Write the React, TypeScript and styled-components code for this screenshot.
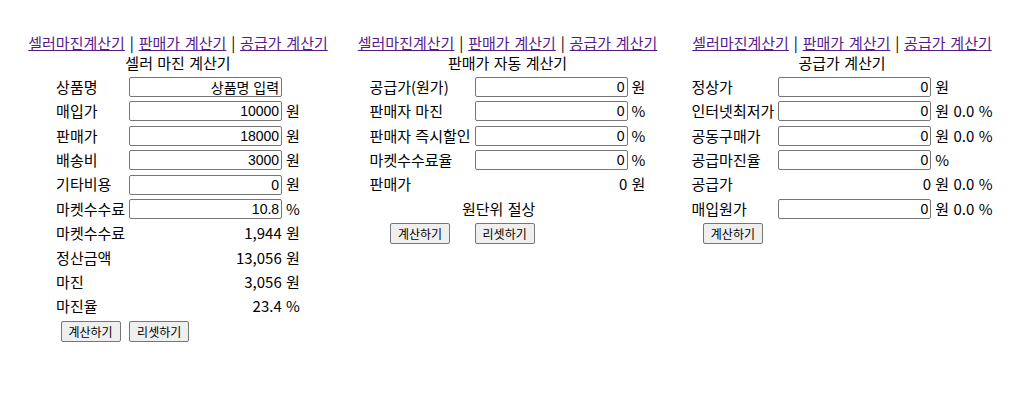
import React from 'react';
import styled, {createGlobalStyle} from "styled-components";

type Row =
    | {kind: 'input'; label: string; value: string; unit?: string}
    | {kind: 'result'; label: string; text: string}
    | {kind: 'note'; text: string};

type Calc = {
    title: string;
    width: number;
    rows: Row[];
    reset: boolean;
};

const calcs: Calc[] = [
    {
        title: '셀러 마진 계산기',
        width: 328,
        reset: true,
        rows: [
            {kind: 'input', label: '상품명', value: '상품명 입력'},
            {kind: 'input', label: '매입가', value: '10000', unit: '원'},
            {kind: 'input', label: '판매가', value: '18000', unit: '원'},
            {kind: 'input', label: '배송비', value: '3000', unit: '원'},
            {kind: 'input', label: '기타비용', value: '0', unit: '원'},
            {kind: 'input', label: '마켓수수료', value: '10.8', unit: '%'},
            {kind: 'result', label: '마켓수수료', text: '1,944 원'},
            {kind: 'result', label: '정산금액', text: '13,056 원'},
            {kind: 'result', label: '마진', text: '3,056 원'},
            {kind: 'result', label: '마진율', text: '23.4 %'},
        ],
    },
    {
        title: '판매가 자동 계산기',
        width: 331,
        reset: true,
        rows: [
            {kind: 'input', label: '공급가(원가)', value: '0', unit: '원'},
            {kind: 'input', label: '판매자 마진', value: '0', unit: '%'},
            {kind: 'input', label: '판매자 즉시할인', value: '0', unit: '%'},
            {kind: 'input', label: '마켓수수료율', value: '0', unit: '%'},
            {kind: 'result', label: '판매가', text: '0 원'},
            {kind: 'note', text: '원단위 절상'},
        ],
    },
    {
        title: '공급가 계산기',
        width: 338,
        reset: false,
        rows: [
            {kind: 'input', label: '정상가', value: '0', unit: '원'},
            {kind: 'input', label: '인터넷최저가', value: '0', unit: '원 0.0 %'},
            {kind: 'input', label: '공동구매가', value: '0', unit: '원 0.0 %'},
            {kind: 'input', label: '공급마진율', value: '0', unit: '%'},
            {kind: 'result', label: '공급가', text: '0 원 0.0 %'},
            {kind: 'input', label: '매입원가', value: '0', unit: '원 0.0 %'},
        ],
    },
];

const Calculator = ({calc}: {calc: Calc}) => {
    return (
        <Column $width={calc.width}>
            <NavLinks>
                <NavLink href="#!">셀러마진계산기</NavLink> | <NavLink href="#!">판매가 계산기</NavLink> | <NavLink href="#!">공급가 계산기</NavLink>
            </NavLinks>
            <Title>{calc.title}</Title>

            <CalcTable>
                <tbody>
                {calc.rows.map((row, i) => {
                    if (row.kind === 'input') {
                        return (
                            <tr key={i}>
                                <Label>{row.label}</Label>
                                <td><Field type="text" defaultValue={row.value}/></td>
                                <Unit>{row.unit}</Unit>
                            </tr>
                        );
                    }
                    if (row.kind === 'result') {
                        return (
                            <tr key={i}>
                                <Label>{row.label}</Label>
                                <Result colSpan={2}>{row.text}</Result>
                            </tr>
                        );
                    }
                    return (
                        <tr key={i}>
                            <Note colSpan={2}>{row.text}</Note>
                            <td/>
                        </tr>
                    );
                })}
                <tr>
                    <ButtonCell $align="center"><Btn type="button">계산하기</Btn></ButtonCell>
                    <ButtonCell $align="left">{calc.reset && <Btn type="button">리셋하기</Btn>}</ButtonCell>
                    <td/>
                </tr>
                </tbody>
            </CalcTable>
        </Column>
    );
};

export default function App() {
    return (
        <>
            <GlobalStyle/>
            <Page>
                {calcs.map((c) => <Calculator key={c.title} calc={c}/>)}
            </Page>
        </>
    );
}

const GlobalStyle = createGlobalStyle`
  body {
    margin: 8px;
    background: #ffffff;
    color: #000000;
    font-family: "Noto Sans CJK KR", "Noto Sans", sans-serif;
    font-size: 15px;
    line-height: 20.4px;
    word-spacing: 1px;
  }
`;

const Page = styled.div`
  display: flex;
  align-items: flex-start;
  padding: 25px 0 0 6px;
`;

const Column = styled.div<{$width: number}>`
  width: ${({$width}) => $width}px;
  flex-shrink: 0;
  text-align: center;
`;

const NavLinks = styled.div`
  white-space: nowrap;
  word-spacing: 1.5px;
`;

const NavLink = styled.a`
  color: #551a8b;
  text-decoration: underline;
`;

const Title = styled.div``;

const CalcTable = styled.table`
  margin: 0 auto;
  border-spacing: 2px;
  text-align: left;

  td {
    padding: 1px;
    height: 20.4px;
    vertical-align: middle;
    white-space: nowrap;
  }
`;

const Label = styled.td``;

const Unit = styled.td``;

const Result = styled.td`
  text-align: right;
`;

const Note = styled.td`
  text-align: center;
`;

const ButtonCell = styled.td<{$align: 'center' | 'left'}>`
  text-align: ${({$align}) => $align};
`;

const Field = styled.input`
  display: block;
  box-sizing: border-box;
  width: 153px;
  height: 20px;
  margin: 0;
  padding: 1px 2px;
  border: 1px solid #767676;
  border-radius: 2px;
  background: #ffffff;
  color: #000000;
  font-family: "Liberation Sans", "Noto Sans CJK KR", sans-serif;
  font-size: 14px;
  word-spacing: 0;
  text-align: right;
`;

const Btn = styled.button`
  box-sizing: border-box;
  height: 21px;
  margin: 0;
  padding: 0 7px;
  border: 1px solid #767676;
  border-radius: 2px;
  background: #efefef;
  color: #000000;
  font-family: "Noto Sans CJK KR", sans-serif;
  font-size: 12px;
  line-height: 17px;
`;
